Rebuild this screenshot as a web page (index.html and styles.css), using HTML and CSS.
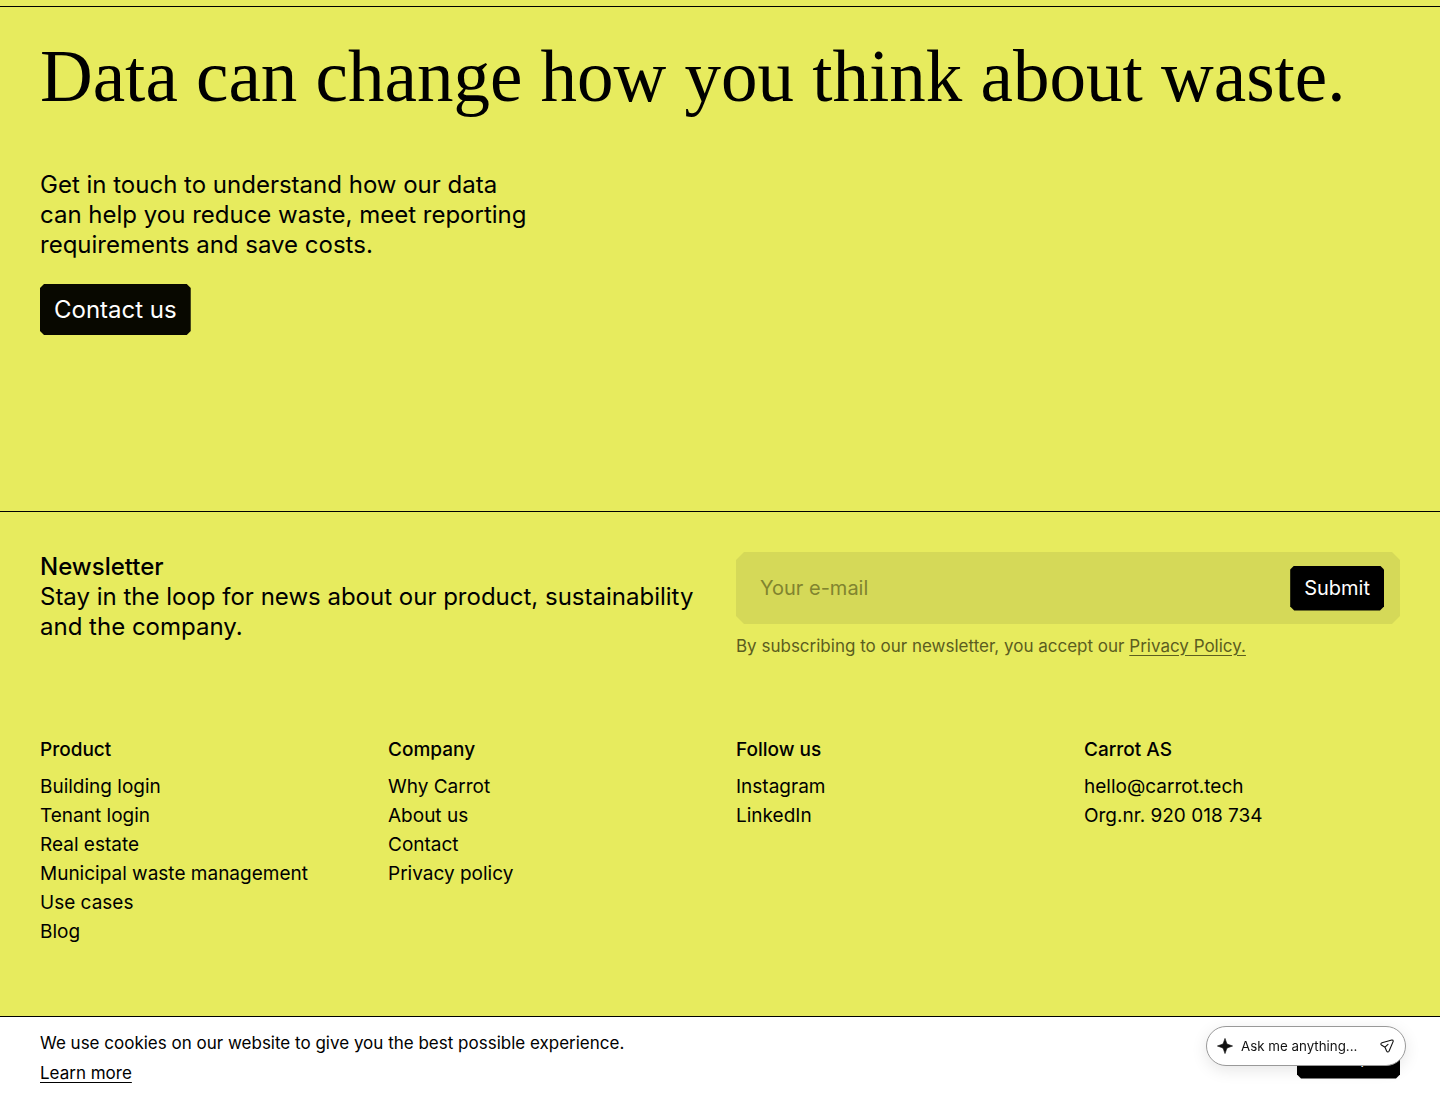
FILE: index.html
```html
<!DOCTYPE html>
<html lang="en">
<head>
    <meta charset="UTF-8">
    <meta name="viewport" content="width=device-width, initial-scale=1.0">
    <title>Carrot</title>
    <link rel="stylesheet" href="styles.css">
</head>
<body>
    <main>
        <section class="cta">
            <h1>Data can change how you think about waste.</h1>
            <p>Get in touch to understand how our data<br>can help you reduce waste, meet reporting<br>requirements and save costs.</p>
            <button type="button" class="btn btn-large">Contact us</button>
        </section>
    </main>

    <footer class="footer">
        <div class="newsletter">
            <div class="newsletter-text">
                <h2>Newsletter</h2>
                <p>Stay in the loop for news about our product, sustainability and the company.</p>
            </div>
            <form class="newsletter-form">
                <div class="field">
                    <input type="email" placeholder="Your e-mail" aria-label="Your e-mail">
                    <button type="submit" class="btn">Submit</button>
                </div>
                <p class="terms">By subscribing to our newsletter, you accept our <a href="#privacy">Privacy Policy.</a></p>
            </form>
        </div>

        <div class="columns">
            <nav>
                <h3>Product</h3>
                <ul>
                    <li><a href="#building">Building login</a></li>
                    <li><a href="#tenant">Tenant login</a></li>
                    <li><a href="#real-estate">Real estate</a></li>
                    <li><a href="#municipal">Municipal waste management</a></li>
                    <li><a href="#use-cases">Use cases</a></li>
                    <li><a href="#blog">Blog</a></li>
                </ul>
            </nav>
            <nav>
                <h3>Company</h3>
                <ul>
                    <li><a href="#why">Why Carrot</a></li>
                    <li><a href="#about">About us</a></li>
                    <li><a href="#contact">Contact</a></li>
                    <li><a href="#privacy">Privacy policy</a></li>
                </ul>
            </nav>
            <nav>
                <h3>Follow us</h3>
                <ul>
                    <li><a href="#instagram">Instagram</a></li>
                    <li><a href="#linkedin">LinkedIn</a></li>
                </ul>
            </nav>
            <div>
                <h3>Carrot AS</h3>
                <ul>
                    <li><a href="mailto:hello@carrot.tech">hello@carrot.tech</a></li>
                    <li>Org.nr. 920 018 734</li>
                </ul>
            </div>
        </div>
    </footer>

    <div class="cookies">
        <div>
            <p>We use cookies on our website to give you the best possible experience.</p>
            <a href="#cookies">Learn more</a>
        </div>
        <button type="button" class="btn">Accept</button>
    </div>

    <form class="ask">
        <svg width="16" height="16" viewBox="0 0 16 16" aria-hidden="true">
            <path d="M8 .4L9.7 5.2Q10 6 10.8 6.3L15.6 8L10.8 9.7Q10 10 9.7 10.8L8 15.6L6.3 10.8Q6 10 5.2 9.7L.4 8L5.2 6.3Q6 6 6.3 5.2Z" fill="#111" stroke="#111" stroke-width=".6" stroke-linejoin="round"/>
        </svg>
        <input type="text" placeholder="Ask me anything..." aria-label="Ask me anything">
        <button type="submit" aria-label="Send">
            <svg width="14" height="14" viewBox="0 0 14 14" fill="none" stroke="#111" stroke-width="1.1" stroke-linejoin="round" stroke-linecap="round">
                <path d="M11.8 1L2 3.8Q0 4.8 1.4 6L5 8.2L6.6 12Q7.8 14 9 12.2L13.2 2.4Q13.2 .8 11.8 1ZM5 8.2L8 5.4"/>
            </svg>
        </button>
    </form>
</body>
</html>
```
FILE: styles.css
```css
* {
    box-sizing: border-box;
}
body {
    margin: 0;
    padding-top: 6px;
    background: #e7eb5e;
    color: #000;
    font-family: Inter, "Open Sans", sans-serif;
    font-size: 19px;
    line-height: 29px;
}
h1, h2, h3, p, ul {
    margin: 0;
    padding: 0;
}
ul {
    list-style: none;
}
a {
    color: inherit;
    text-decoration: none;
}

/* buttons with cut corners */
.btn {
    height: 45px;
    padding: 0 14px;
    border: none;
    background: #000;
    color: #fff;
    font: inherit;
    cursor: pointer;
    clip-path: polygon(4px 0, calc(100% - 4px) 0, 100% 4px, 100% calc(100% - 4px), calc(100% - 4px) 100%, 4px 100%, 0 calc(100% - 4px), 0 4px);
}
.btn-large {
    height: 51px;
    background: #080800;
    font-size: 24px;
}

/* contact section */
.cta {
    padding: 22px 40px 176px;
    border-top: 1px solid #000;
}
.cta h1 {
    margin-bottom: 45px;
    font-family: "Liberation Serif", serif;
    font-size: 73px;
    font-weight: 400;
    line-height: 96px;
}
.cta p {
    margin-bottom: 24px;
    font-size: 24px;
    line-height: 30px;
}
.cta .btn {
    display: block;
}

/* footer */
.footer {
    padding: 40px 40px 154px;
    border-top: 1px solid #000;
}
.newsletter {
    display: grid;
    grid-template-columns: 1fr 1fr;
    gap: 32px;
    margin-bottom: 74px;
}
.newsletter-text {
    font-size: 24px;
    line-height: 30px;
}
.newsletter-text h2 {
    font-size: 24px;
    font-weight: 500;
}
.field {
    display: flex;
    align-items: center;
    height: 72px;
    padding: 0 16px 0 24px;
    background: #d5d958;
    font-size: 20px;
    clip-path: polygon(8px 0, calc(100% - 8px) 0, 100% 8px, 100% calc(100% - 8px), calc(100% - 8px) 100%, 8px 100%, 0 calc(100% - 8px), 0 8px);
}
.field input {
    flex: 1;
    min-width: 0;
    padding: 0;
    border: none;
    outline: none;
    background: none;
    font: inherit;
}
.field input::placeholder {
    color: #81842f;
}
.terms {
    margin-top: 8px;
    color: #5b5d20;
    font-size: 17px;
}
.terms a {
    text-decoration: underline;
    text-underline-offset: 3px;
}
.columns {
    display: grid;
    grid-template-columns: repeat(4, 1fr);
    gap: 32px;
}
.columns h3 {
    margin-bottom: 8px;
    font-size: 19px;
    font-weight: 500;
}

/* cookie bar */
.cookies {
    position: fixed;
    left: 0;
    right: 0;
    bottom: 0;
    display: flex;
    justify-content: space-between;
    align-items: center;
    padding: 11px 40px 12px;
    border-top: 1px solid #000;
    background: #fff;
    font-size: 17px;
    line-height: 30px;
}
.cookies a {
    text-decoration: underline;
    text-underline-offset: 3px;
}
.cookies .btn {
    min-width: 103px;
    height: 41px;
    font-size: 16px;
}

/* chat box */
.ask {
    position: fixed;
    right: 34px;
    bottom: 34px;
    display: flex;
    align-items: center;
    gap: 8px;
    width: 200px;
    height: 40px;
    padding: 0 11px 0 10px;
    border: 1px solid #999;
    border-radius: 20px;
    background: #fff;
    box-shadow: 0 4px 16px rgba(0,0,0,0.1);
}
.ask svg {
    display: block;
    flex: none;
}
.ask input {
    flex: 1;
    min-width: 0;
    padding: 0;
    border: none;
    outline: none;
    background: none;
    font-family: Inter, sans-serif;
}
.ask input::placeholder {
    color: #111;
}
.ask button {
    padding: 0;
    border: none;
    background: none;
    cursor: pointer;
}
```
